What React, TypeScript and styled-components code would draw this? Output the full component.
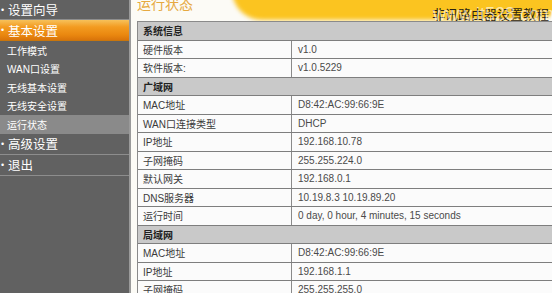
import React from 'react';
import styled, { createGlobalStyle } from 'styled-components';

const GlobalStyle = createGlobalStyle`
    html, body {
        margin: 0;
        padding: 0;
        background: #fcfbf6;
        overflow: hidden;
    }
    body {
        font-family: "Liberation Sans", "Noto Sans CJK SC", sans-serif;
    }
`;

const Page = styled.div`
    position: relative;
    display: flex;
    width: 552px;
    height: 293px;
    overflow: hidden;
`;

const Sidebar = styled.div`
    width: 129px;
    flex-shrink: 0;
    background: #616161;
    border-right: 2px solid #9a9a9a;
    display: flex;
    flex-direction: column;
`;

const TopItem = styled.div<{ $active?: boolean }>`
    height: 20px;
    display: flex;
    align-items: center;
    gap: 4px;
    padding-left: 1px;
    color: #ffffff;
    font-size: 12.5px;
    border-bottom: 1px solid ${props => props.$active ? '#c9760c' : '#8d8d8d'};
    background: ${props => props.$active
        ? 'linear-gradient(#f7c15a 0%, #f39b20 35%, #ea870f 75%, #d9740a 100%)'
        : 'transparent'};
    &:first-child {
        height: 19px;
    }
`;

const Bullet = styled.span`
    font-size: 9px;
    width: 3px;
`;

const SubItem = styled.div<{ $selected?: boolean }>`
    height: 18.5px;
    display: flex;
    align-items: center;
    padding-left: 7px;
    color: #ffffff;
    font-size: 10px;
    background: ${props => props.$selected ? '#8a8a8a' : 'transparent'};
`;

const Main = styled.div`
    flex: 1;
    padding-left: 6px;
    display: flex;
    flex-direction: column;
`;

const TitleBar = styled.div`
    height: 21px;
    flex-shrink: 0;
`;

const Title = styled.div`
    margin-top: -3px;
    line-height: 14px;
    font-size: 14px;
    color: #e6a941;
`;

const Table = styled.div`
    width: 560px;
    border-left: 1px solid #8a8a8a;
    border-top: 1px solid #8a8a8a;
    position: relative;
    z-index: 1;
`;

const SectionRow = styled.div`
    height: 17.5px;
    display: flex;
    align-items: center;
    padding-left: 5px;
    background: #c9c9c9;
    border-bottom: 1px solid #7e7e7e;
    font-size: 10px;
    font-weight: bold;
    color: #222;
`;

const DataRow = styled.div`
    height: 17.5px;
    display: grid;
    grid-template-columns: 154px 1fr;
    background: #fbfbfb;
    border-bottom: 1px solid #7e7e7e;
    font-size: 10px;
    color: #3a3a3a;
`;

const Label = styled.div`
    display: flex;
    align-items: center;
    padding-left: 5px;
    border-right: 1px solid #8a8a8a;
`;

const Value = styled.div`
    display: flex;
    align-items: center;
    padding-left: 6px;
    color: #4a4a4a;
`;

const Blob = styled.div`
    position: absolute;
    left: 232px;
    top: -30px;
    width: 340px;
    height: 50px;
    border-radius: 0 0 40px 30px;
    background: #fbc420;
    filter: blur(2px);
`;

const SiteName = styled.div`
    position: absolute;
    left: 432px;
    top: 4px;
    font-size: 13px;
    color: #2b2212;
    white-space: nowrap;
`;

const SiteUrl = styled.div`
    position: absolute;
    left: 433px;
    top: 4px;
    font-size: 18px;
    color: rgba(255, 255, 255, 0.6);
    white-space: nowrap;
`;

type Row = { section: string } | { label: string; value: string };

const rows: Row[] = [
    { section: '系统信息' },
    { label: '硬件版本', value: 'v1.0' },
    { label: '软件版本:', value: 'v1.0.5229' },
    { section: '广域网' },
    { label: 'MAC地址', value: 'D8:42:AC:99:66:9E' },
    { label: 'WAN口连接类型', value: 'DHCP' },
    { label: 'IP地址', value: '192.168.10.78' },
    { label: '子网掩码', value: '255.255.224.0' },
    { label: '默认网关', value: '192.168.0.1' },
    { label: 'DNS服务器', value: '10.19.8.3 10.19.89.20' },
    { label: '运行时间', value: '0 day, 0 hour, 4 minutes, 15 seconds' },
    { section: '局域网' },
    { label: 'MAC地址', value: 'D8:42:AC:99:66:9E' },
    { label: 'IP地址', value: '192.168.1.1' },
    { label: '子网掩码', value: '255.255.255.0' },
];

const subItems = ['工作模式', 'WAN口设置', '无线基本设置', '无线安全设置', '运行状态'];

export default function App() {
    return (
        <>
            <GlobalStyle />
            <Page>
                <Sidebar>
                    <TopItem><Bullet>•</Bullet>设置向导</TopItem>
                    <TopItem $active><Bullet>•</Bullet>基本设置</TopItem>
                    {subItems.map(item => (
                        <SubItem key={item} $selected={item === '运行状态'}>{item}</SubItem>
                    ))}
                    <TopItem><Bullet>•</Bullet>高级设置</TopItem>
                    <TopItem><Bullet>•</Bullet>退出</TopItem>
                </Sidebar>
                <Main>
                    <TitleBar>
                        <Title>运行状态</Title>
                    </TitleBar>
                    <Table>
                        {rows.map((row, i) =>
                            'section' in row ? (
                                <SectionRow key={i}>{row.section}</SectionRow>
                            ) : (
                                <DataRow key={i}>
                                    <Label>{row.label}</Label>
                                    <Value>{row.value}</Value>
                                </DataRow>
                            )
                        )}
                    </Table>
                </Main>
                <Blob />
                <SiteName>非讯路由器设置教程</SiteName>
                <SiteUrl>www.it528.com</SiteUrl>
            </Page>
        </>
    );
}
